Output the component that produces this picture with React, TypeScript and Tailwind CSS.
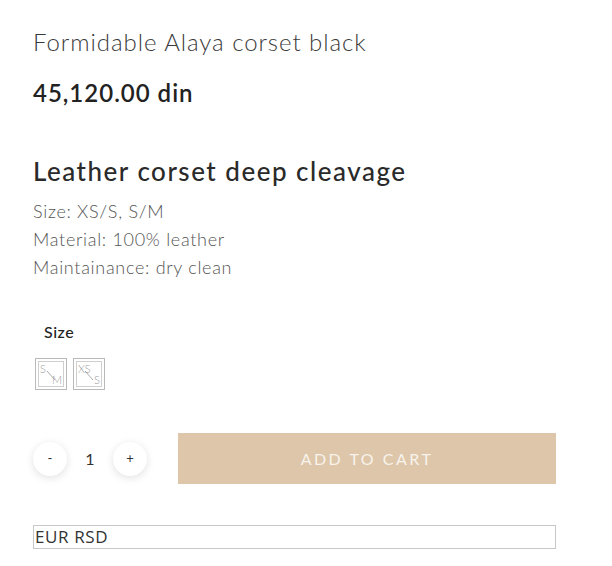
const font = { fontFamily: "Lato, 'Open Sans', sans-serif" };

function Swatch({ top, bottom }: { top: string; bottom: string }) {
  return (
    <button className="h-[32px] w-[32px] border border-[#b9b9b9] p-[2px]">
      <div className="relative h-full w-full border border-[#cfcfcf] text-[11px] font-light leading-none text-[#9a9a9a]">
        <span className="absolute left-[1px] top-[1px]">{top}</span>
        <svg className="absolute inset-0 h-full w-full" viewBox="0 0 24 24">
          <line x1="8" y1="9" x2="16" y2="18" stroke="#a0a0a0" strokeWidth="0.9" />
        </svg>
        <span className="absolute bottom-[1px] right-[1px]">{bottom}</span>
      </div>
    </button>
  );
}

function Round({ label }: { label: string }) {
  return (
    <button className="flex h-[34px] w-[34px] items-center justify-center rounded-full bg-white text-[13px] text-[#333] shadow-[0_2px_8px_rgba(0,0,0,0.12)]">
      {label}
    </button>
  );
}

export default function App() {
  return (
    <div className="h-[566px] w-[612px] bg-white pl-[33px] pr-[56px] pt-[27px]" style={font}>
      <h1 className="text-[24px] font-light leading-[30px] tracking-[0.95px] text-[#3a3a3a]">
        Formidable Alaya corset black
      </h1>
      <div className="mt-[21px] text-[24px] font-semibold leading-[30px] tracking-[1px] text-[#222]">45,120.00 din</div>

      <h2 className="mt-[46px] text-[26px] font-medium leading-[34px] tracking-[1.5px] text-[#2a2a2a]">
        Leather corset deep cleavage
      </h2>
      <div className="mt-[9px] text-[18px] font-light leading-[28px] tracking-[0.7px] text-[#555]">
        <p>Size: XS/S, S/M</p>
        <p>Material: 100% leather</p>
        <p>Maintainance: dry clean</p>
      </div>

      <div className="ml-[11px] mt-[39px] text-[16px] font-medium leading-[24px] tracking-[0.5px] text-[#222]">Size</div>
      <div className="ml-[2px] mt-[14px] flex gap-[6px]">
        <Swatch top="S" bottom="M" />
        <Swatch top="XS" bottom="S" />
      </div>

      <div className="mt-[43px] flex items-center">
        <div className="flex w-[145px] items-center">
          <Round label="-" />
          <span className="w-[46px] text-center text-[16px] text-[#333]">1</span>
          <Round label="+" />
        </div>
        <button className="h-[51px] flex-1 bg-[#ddc6a9] text-[16px] tracking-[2.5px] text-[#f8f3ec]">
          ADD TO CART
        </button>
      </div>

      <div
        className="mt-[41px] h-[24px] border border-[#c8c8c8] pl-[1px] text-[17px] leading-[21px] tracking-[0.6px] text-[#333]"
        style={{ fontFamily: "'Open Sans', sans-serif" }}
      >
        EUR RSD
      </div>
    </div>
  );
}
